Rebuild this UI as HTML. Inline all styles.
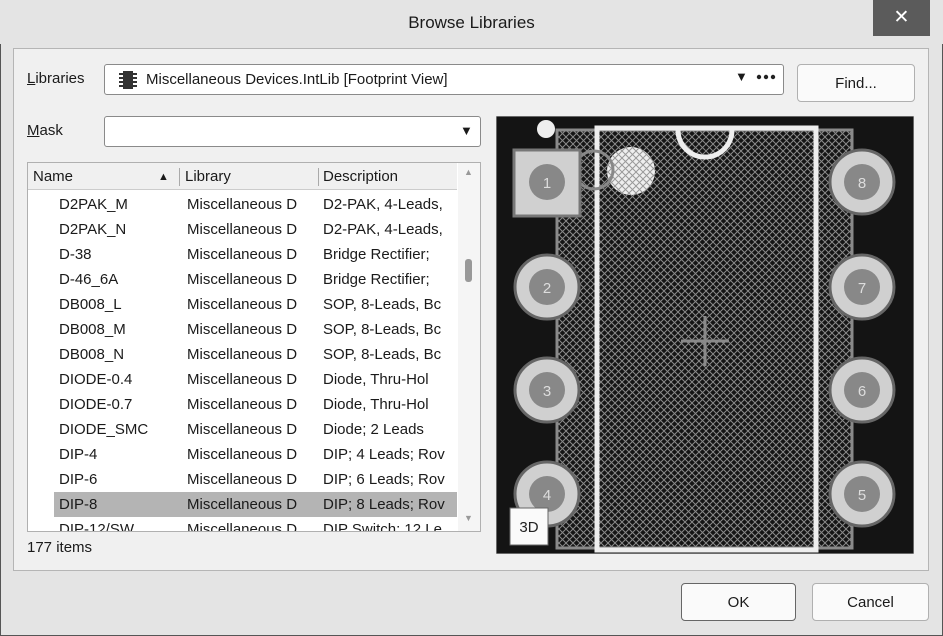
<!DOCTYPE html>
<html><head><meta charset="utf-8"><style>
*{box-sizing:border-box;margin:0;padding:0}
body{width:943px;height:636px;overflow:hidden;background:#e4e4e4;font-family:"Liberation Sans","DejaVu Sans",sans-serif;color:#1a1a1a;position:relative}
.a{position:absolute}
.win{left:0;top:0;width:943px;height:636px;border:1px solid #555;border-top:none}
.title{left:0;top:0;width:943px;height:44px;background:#e4e4e4;text-align:center;font-size:17px;line-height:46px}
.close{left:873px;top:0;width:57px;height:36px;background:#5b5b5b;color:#fff;font-weight:bold;font-size:19px;text-align:center;line-height:36px}
.panel{left:13px;top:48px;width:916px;height:523px;background:#f0f0f0;border:1px solid #b5b5b5}
.lbl{font-size:15px}
.box{background:#fff;border:1px solid #8a8a8a;border-radius:3px}
.btn{background:#fafafa;border:1px solid #b0b0b0;border-radius:4px;text-align:center;font-size:15px}
.row{position:absolute;left:0;height:25px;font-size:15px;line-height:25px;white-space:nowrap;width:429px;overflow:hidden}
.row span{position:absolute}
</style></head><body>
<div class="a win"></div>
<div class="a title">Browse Libraries</div>
<div class="a close">✕</div>
<div class="a panel"></div>
<div class="a lbl" style="left:27px;top:70px"><u>L</u>ibraries</div>
<div class="a box" style="left:104px;top:64px;width:680px;height:31px"></div>
<svg class="a" style="left:118px;top:69px" width="20" height="22"><rect x="5" y="2" width="10" height="18" fill="#333"/><g stroke="#333" stroke-width="2"><line x1="1" y1="5" x2="19" y2="5"/><line x1="1" y1="9" x2="19" y2="9"/><line x1="1" y1="13" x2="19" y2="13"/><line x1="1" y1="17" x2="19" y2="17"/></g></svg>
<div class="a lbl" style="left:146px;top:71px">Miscellaneous Devices.IntLib [Footprint View]</div>
<div class="a" style="left:735px;top:69px;font-size:13px">▼</div>
<svg class="a" style="left:755px;top:73px" width="24" height="8"><circle cx="4" cy="4" r="2.2" fill="#222"/><circle cx="11" cy="4" r="2.2" fill="#222"/><circle cx="18" cy="4" r="2.2" fill="#222"/></svg>
<div class="a btn" style="left:797px;top:64px;width:118px;height:38px;line-height:38px">Find...</div>
<div class="a lbl" style="left:27px;top:122px"><u>M</u>ask</div>
<div class="a box" style="left:104px;top:116px;width:377px;height:31px"></div>
<div class="a" style="left:460px;top:123px;font-size:13px">▼</div>
<div class="a" style="left:27px;top:162px;width:454px;height:370px;background:#fff;border:1px solid #b0b0b0;overflow:hidden">
 <div class="a" style="left:0;top:0;width:429px;height:27px;background:#f0f0f0;border-bottom:1px solid #ccc;font-size:15px;line-height:28px">
  <span class="a" style="left:5px">Name</span><span class="a" style="left:130px;font-size:11px;top:0">▲</span>
  <span class="a" style="left:151px;top:5px;height:18px;border-left:1px solid #aaa"></span><span class="a" style="left:157px">Library</span>
  <span class="a" style="left:290px;top:5px;height:18px;border-left:1px solid #aaa"></span><span class="a" style="left:295px">Description</span>
 </div>
 <div class="a" style="left:430px;top:0;width:22px;height:368px;background:#f5f5f5"></div>
 <div class="a" style="left:436px;top:4px;font-size:9px;color:#999">▲</div>
 <div class="a" style="left:437px;top:96px;width:7px;height:23px;background:#999;border-radius:3px"></div>
 <div class="a" style="left:436px;top:350px;font-size:9px;color:#999">▼</div>
 <div class="a" style="left:0;top:29px;width:429px;height:340px">
  <div class="row" style="top:0"><span style="left:31px">D2PAK_M</span><span style="left:159px">Miscellaneous D</span><span style="left:295px">D2-PAK, 4-Leads,</span></div>
  <div class="row" style="top:25px"><span style="left:31px">D2PAK_N</span><span style="left:159px">Miscellaneous D</span><span style="left:295px">D2-PAK, 4-Leads,</span></div>
  <div class="row" style="top:50px"><span style="left:31px">D-38</span><span style="left:159px">Miscellaneous D</span><span style="left:295px">Bridge Rectifier;</span></div>
  <div class="row" style="top:75px"><span style="left:31px">D-46_6A</span><span style="left:159px">Miscellaneous D</span><span style="left:295px">Bridge Rectifier;</span></div>
  <div class="row" style="top:100px"><span style="left:31px">DB008_L</span><span style="left:159px">Miscellaneous D</span><span style="left:295px">SOP, 8-Leads, Bc</span></div>
  <div class="row" style="top:125px"><span style="left:31px">DB008_M</span><span style="left:159px">Miscellaneous D</span><span style="left:295px">SOP, 8-Leads, Bc</span></div>
  <div class="row" style="top:150px"><span style="left:31px">DB008_N</span><span style="left:159px">Miscellaneous D</span><span style="left:295px">SOP, 8-Leads, Bc</span></div>
  <div class="row" style="top:175px"><span style="left:31px">DIODE-0.4</span><span style="left:159px">Miscellaneous D</span><span style="left:295px">Diode, Thru-Hol</span></div>
  <div class="row" style="top:200px"><span style="left:31px">DIODE-0.7</span><span style="left:159px">Miscellaneous D</span><span style="left:295px">Diode, Thru-Hol</span></div>
  <div class="row" style="top:225px"><span style="left:31px">DIODE_SMC</span><span style="left:159px">Miscellaneous D</span><span style="left:295px">Diode; 2 Leads</span></div>
  <div class="row" style="top:250px"><span style="left:31px">DIP-4</span><span style="left:159px">Miscellaneous D</span><span style="left:295px">DIP; 4 Leads; Rov</span></div>
  <div class="row" style="top:275px"><span style="left:31px">DIP-6</span><span style="left:159px">Miscellaneous D</span><span style="left:295px">DIP; 6 Leads; Rov</span></div>
  <div class="row" style="top:300px;left:26px;width:403px;background:#b4b4b4"><span style="left:5px">DIP-8</span><span style="left:133px">Miscellaneous D</span><span style="left:269px">DIP; 8 Leads; Rov</span></div>
  <div class="row" style="top:325px"><span style="left:31px">DIP-12/SW</span><span style="left:159px">Miscellaneous D</span><span style="left:295px">DIP Switch; 12 Le</span></div>
 </div>
</div>
<div class="a lbl" style="left:27px;top:539px">177 items</div>
<svg class="a" style="left:496px;top:116px" width="418" height="438">
<defs><pattern id="h" width="7" height="7" patternUnits="userSpaceOnUse"><rect width="7" height="7" fill="#151515"/><path d="M0 0L7 7M7 0L0 7" stroke="#8a8a8a" stroke-width="1"/></pattern>
<pattern id="h2" width="7" height="7" patternUnits="userSpaceOnUse"><rect width="7" height="7" fill="#eee"/><path d="M0 0L7 7M7 0L0 7" stroke="#999" stroke-width="1"/></pattern></defs>
<rect width="418" height="438" fill="#141414" stroke="#bbb"/>
<rect x="61" y="14" width="295" height="418" fill="url(#h)" stroke="#8a8a8a" stroke-width="3"/>
<rect x="101" y="12" width="219" height="422" fill="none" stroke="#eee" stroke-width="5"/>
<circle cx="135" cy="55" r="24" fill="url(#h2)"/>
<path d="M182 14 A27 27 0 0 0 236 14" fill="none" stroke="#eee" stroke-width="5"/>
<circle cx="50" cy="13" r="9" fill="#eee"/>
<circle cx="98" cy="54" r="19" fill="none" stroke="#888" stroke-width="3"/>
<rect x="18" y="34" width="66" height="66" fill="#d0d0d0" stroke="#777" stroke-width="3"/>
<g stroke="#8a8a8a" stroke-width="3"><line x1="185" y1="225" x2="233" y2="225"/><line x1="209" y1="200" x2="209" y2="250"/></g>
<g font-size="15" fill="#ddd" text-anchor="middle" font-family="Liberation Sans">
<circle cx="51" cy="66" r="18" fill="#888"/><text x="51" y="72">1</text>
<g fill="#d0d0d0" stroke="#666" stroke-width="3"><circle cx="51" cy="171" r="32"/><circle cx="51" cy="274" r="32"/><circle cx="51" cy="378" r="32"/><circle cx="366" cy="66" r="32"/><circle cx="366" cy="171" r="32"/><circle cx="366" cy="274" r="32"/><circle cx="366" cy="378" r="32"/></g>
<g fill="#888"><circle cx="51" cy="171" r="18"/><circle cx="51" cy="274" r="18"/><circle cx="51" cy="378" r="18"/><circle cx="366" cy="66" r="18"/><circle cx="366" cy="171" r="18"/><circle cx="366" cy="274" r="18"/><circle cx="366" cy="378" r="18"/></g>
<text x="51" y="177">2</text><text x="51" y="280">3</text><text x="51" y="384">4</text><text x="366" y="72">8</text><text x="366" y="177">7</text><text x="366" y="280">6</text><text x="366" y="384">5</text>
</g>
<rect x="14" y="392" width="38" height="37" fill="#fafafa" stroke="#666"/>
<text x="33" y="416" font-size="15" fill="#222" text-anchor="middle" font-family="Liberation Sans">3D</text>
</svg>
<div class="a btn" style="left:681px;top:583px;width:115px;height:38px;line-height:38px;border-color:#666">OK</div>
<div class="a btn" style="left:812px;top:583px;width:117px;height:38px;line-height:38px">Cancel</div>
</body></html>
